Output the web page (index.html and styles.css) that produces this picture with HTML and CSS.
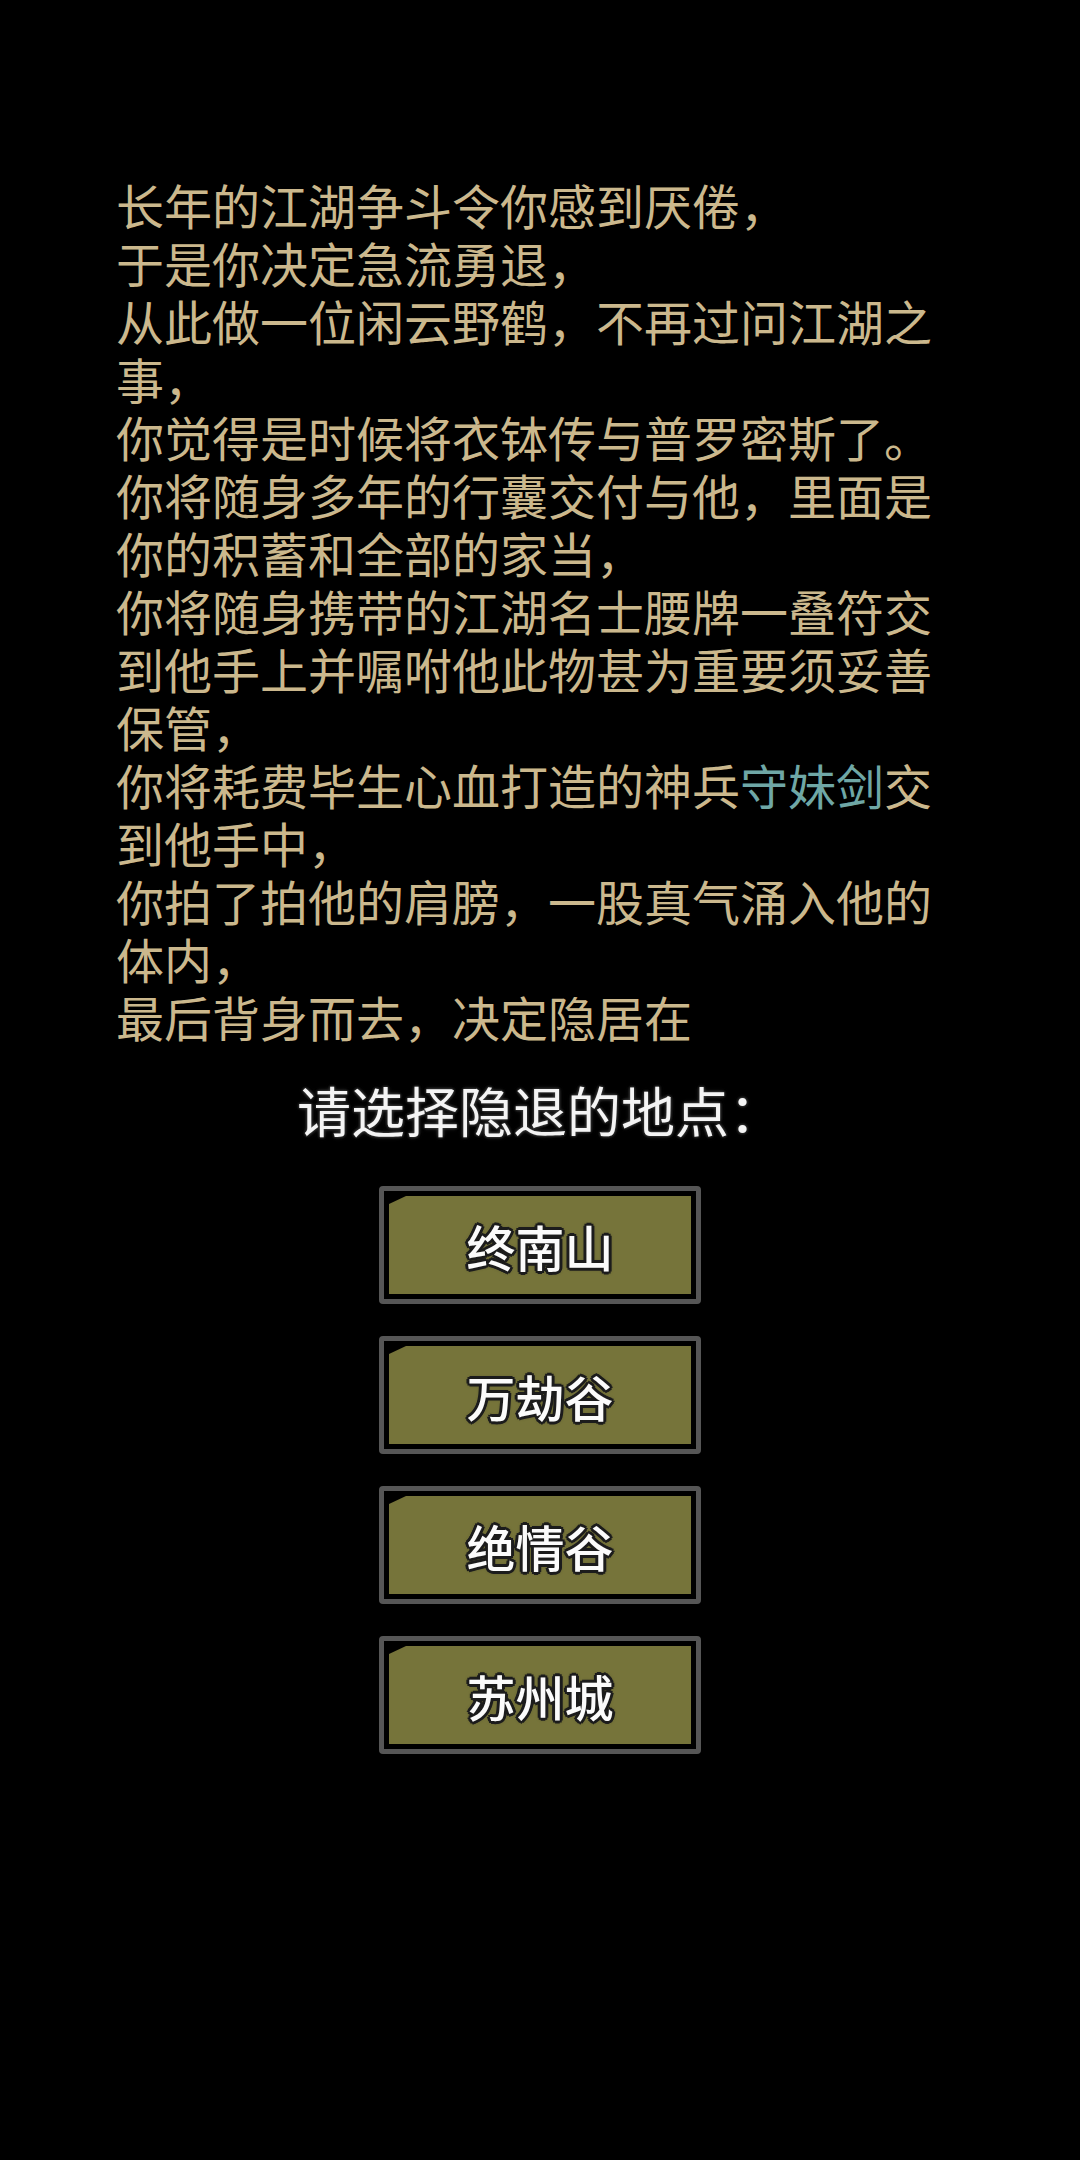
FILE: index.html
```html
<!DOCTYPE html>
<html lang="zh-CN">
<head>
    <meta charset="UTF-8">
    <meta name="viewport" content="width=device-width, initial-scale=1.0">
    <title>归隐</title>
    <link rel="stylesheet" href="styles.css">
</head>
<body>
    <div class="retire-page">
        <div class="story">
            <p>长年的江湖争斗令你感到厌倦，</p>
            <p>于是你决定急流勇退，</p>
            <p>从此做一位闲云野鹤，不再过问江湖之事，</p>
            <p>你觉得是时候将衣钵传与普罗密斯了。</p>
            <p>你将随身多年的行囊交付与他，里面是你的积蓄和全部的家当，</p>
            <p>你将随身携带的江湖名士腰牌一叠符交到他手上并嘱咐他此物甚为重要须妥善保管，</p>
            <p>你将耗费毕生心血打造的神兵<span class="item-name">守妹剑</span>交到他手中，</p>
            <p>你拍了拍他的肩膀，一股真气涌入他的体内，</p>
            <p>最后背身而去，决定隐居在</p>
        </div>

        <h2 class="choose-title">请选择隐退的地点：</h2>

        <div class="place-list">
            <button class="place-btn"><span class="place-face">终南山</span></button>
            <button class="place-btn"><span class="place-face">万劫谷</span></button>
            <button class="place-btn"><span class="place-face">绝情谷</span></button>
            <button class="place-btn"><span class="place-face">苏州城</span></button>
        </div>
    </div>
</body>
</html>
```

FILE: styles.css
```css
html, body {
    margin: 0;
    padding: 0;
    background-color: #000;
}

.retire-page {
    width: 1080px;
    min-height: 2160px;
    font-family: "Noto Sans CJK SC", "Noto Sans", sans-serif;
}

.story {
    width: 848px;
    margin: 0 auto;
    padding-top: 175px;
    color: #cbb88d;
    font-size: 48px;
    line-height: 58px;
}

.story p {
    margin: 0;
}

.item-name {
    color: #6fa7a6;
}

.choose-title {
    margin: 30px 0 0;
    text-align: center;
    font-size: 54px;
    font-weight: 400;
    line-height: 70px;
    color: #f4f4f4;
    text-shadow: 0 0 3px #3a3a3a, 0 0 3px #3a3a3a, 0 0 5px #2a2a2a;
}

.place-list {
    display: flex;
    flex-direction: column;
    align-items: center;
    gap: 32px;
    margin-top: 41px;
}

.place-btn {
    display: block;
    padding: 5px;
    background-color: #000;
    border: 5px solid #565656;
    border-radius: 4px;
    cursor: pointer;
}

.place-face {
    display: flex;
    align-items: center;
    justify-content: center;
    width: 302px;
    height: 98px;
    background-color: #76743a;
    clip-path: polygon(17px 0, 100% 0, 100% 100%, 0 100%, 0 8px);
    font-family: "Noto Sans CJK SC", "Noto Sans", sans-serif;
    font-size: 49px;
    font-weight: 500;
    color: #fbfbfb;
    text-shadow:
        3px 0 0 #1c1c1c, -3px 0 0 #1c1c1c, 0 3px 0 #1c1c1c, 0 -3px 0 #1c1c1c,
        2px 2px 0 #1c1c1c, -2px 2px 0 #1c1c1c, 2px -2px 0 #1c1c1c, -2px -2px 0 #1c1c1c,
        0 0 4px #1c1c1c;
}
```
